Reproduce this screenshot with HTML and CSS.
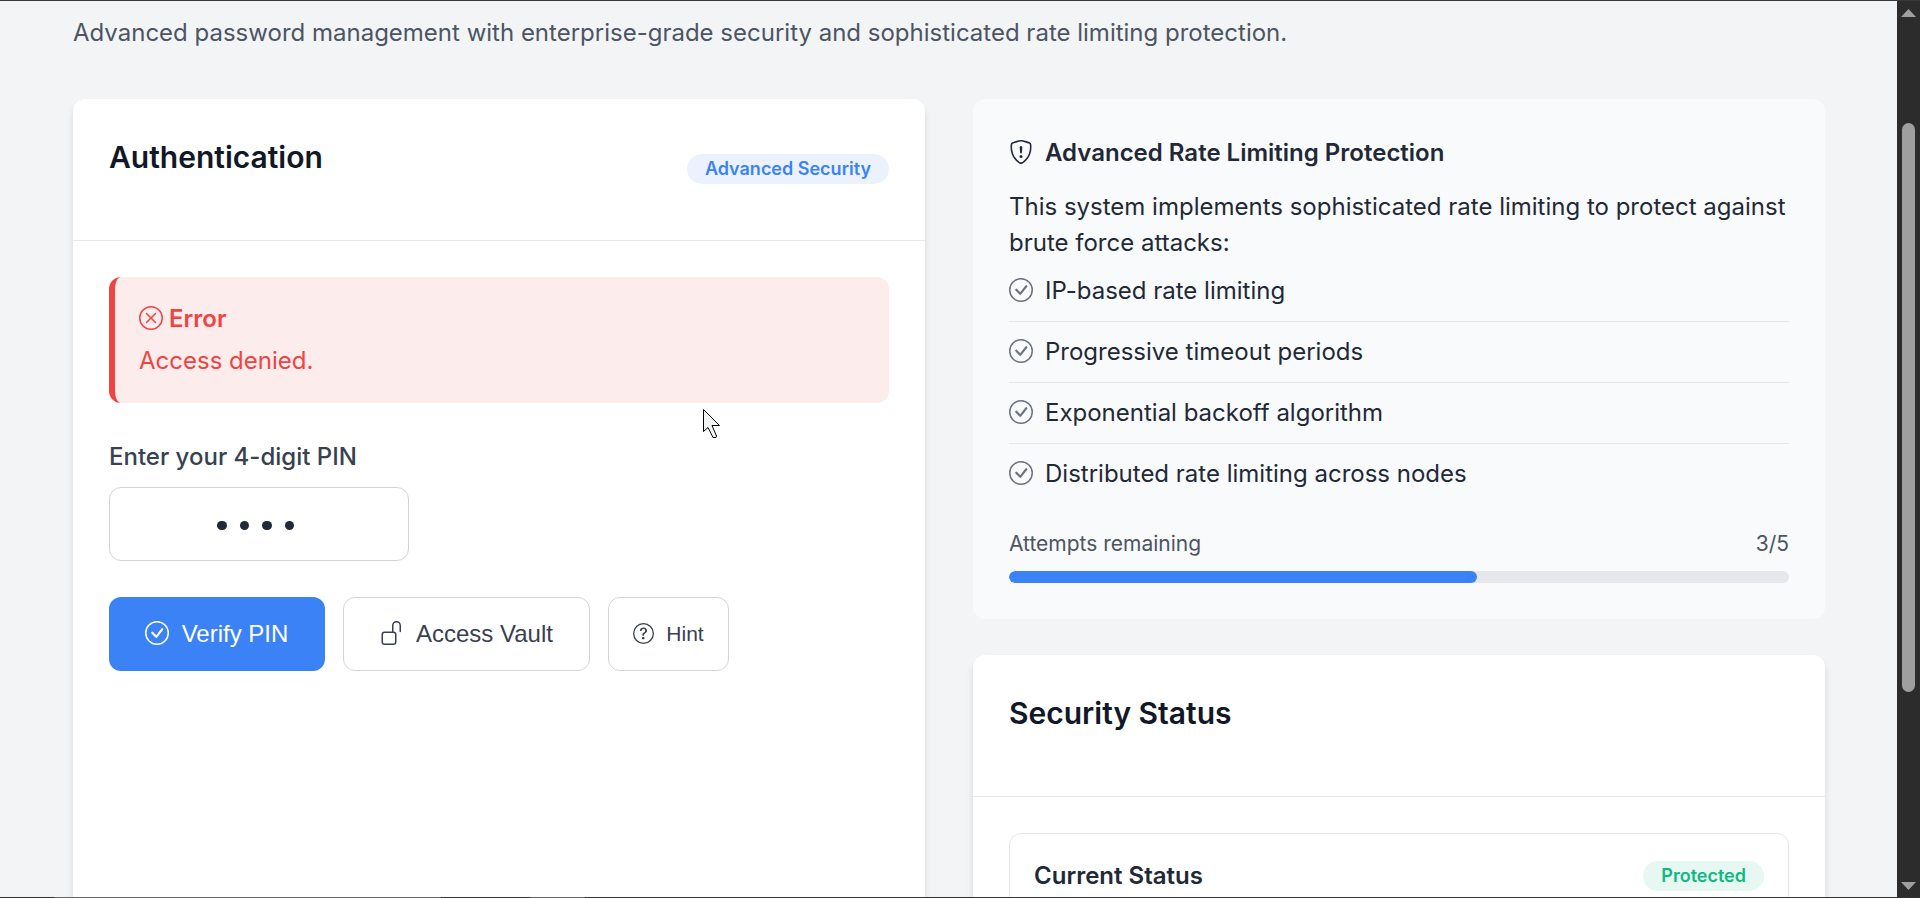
FILE: index.html
```html
<!DOCTYPE html>
<html lang="en">
<head>
<meta charset="utf-8">
<title>Password Vault</title>
<link rel="stylesheet" href="styles.css">
</head>
<body>
<svg class="sprite" aria-hidden="true">
  <symbol id="check-circle" viewBox="0 0 16 16"><path d="M8 15A7 7 0 1 1 8 1a7 7 0 0 1 0 14m0 1A8 8 0 1 0 8 0a8 8 0 0 0 0 16"/><path d="m10.97 4.97-.02.022-3.473 4.425-2.093-2.094a.75.75 0 0 0-1.06 1.06L6.97 11.03a.75.75 0 0 0 1.079-.02l3.992-4.99a.75.75 0 0 0-1.071-1.05"/></symbol>
  <symbol id="x-circle" viewBox="0 0 16 16"><path d="M8 15A7 7 0 1 1 8 1a7 7 0 0 1 0 14m0 1A8 8 0 1 0 8 0a8 8 0 0 0 0 16"/><path d="M4.646 4.646a.5.5 0 0 1 .708 0L8 7.293l2.646-2.647a.5.5 0 0 1 .708.708L8.707 8l2.647 2.646a.5.5 0 0 1-.708.708L8 8.707l-2.646 2.647a.5.5 0 0 1-.708-.708L7.293 8 4.646 5.354a.5.5 0 0 1 0-.708"/></symbol>
  <symbol id="question-circle" viewBox="0 0 16 16"><path d="M8 15A7 7 0 1 1 8 1a7 7 0 0 1 0 14m0 1A8 8 0 1 0 8 0a8 8 0 0 0 0 16"/><path d="M5.255 5.786a.237.237 0 0 0 .241.247h.825c.138 0 .248-.113.266-.25.09-.656.54-1.134 1.342-1.134.686 0 1.314.343 1.314 1.168 0 .635-.374.927-.965 1.371-.673.489-1.206 1.06-1.168 1.987l.003.217a.25.25 0 0 0 .25.246h.811a.25.25 0 0 0 .25-.25v-.105c0-.718.273-.927 1.01-1.486.609-.463 1.244-.977 1.244-2.056 0-1.511-1.276-2.241-2.673-2.241-1.267 0-2.655.59-2.75 2.286m1.557 5.763c0 .533.425.927 1.01.927.609 0 1.028-.394 1.028-.927 0-.552-.42-.94-1.029-.94-.584 0-1.009.388-1.009.94"/></symbol>
  <symbol id="unlock" viewBox="0 0 16 16"><path d="M11 1a2 2 0 0 0-2 2v4a2 2 0 0 1 2 2v5a2 2 0 0 1-2 2H3a2 2 0 0 1-2-2V9a2 2 0 0 1 2-2h5V3a3 3 0 0 1 6 0v4a.5.5 0 0 1-1 0V3a2 2 0 0 0-2-2M3 8a1 1 0 0 0-1 1v5a1 1 0 0 0 1 1h6a1 1 0 0 0 1-1V9a1 1 0 0 0-1-1z"/></symbol>
  <symbol id="shield" viewBox="0 0 16 16"><path d="M5.338 1.59a61 61 0 0 0-2.837.856.48.48 0 0 0-.328.39c-.554 4.157.726 7.19 2.253 9.188a10.7 10.7 0 0 0 2.287 2.233c.346.244.652.42.893.533q.18.085.293.118a1 1 0 0 0 .101.025 1 1 0 0 0 .1-.025q.114-.034.294-.118c.24-.113.547-.29.893-.533a10.7 10.7 0 0 0 2.287-2.233c1.527-1.997 2.807-5.031 2.253-9.188a.48.48 0 0 0-.328-.39c-.651-.213-1.75-.56-2.837-.855C9.552 1.29 8.531 1.067 8 1.067c-.53 0-1.552.223-2.662.524zM5.072.56C6.157.265 7.31 0 8 0s1.843.265 2.928.56c1.11.3 2.229.655 2.887.87a1.54 1.54 0 0 1 1.044 1.262c.596 4.477-.787 7.795-2.465 9.99a11.8 11.8 0 0 1-2.517 2.453 7 7 0 0 1-1.048.625c-.28.132-.581.24-.829.24s-.548-.108-.829-.24a7 7 0 0 1-1.048-.625 11.8 11.8 0 0 1-2.517-2.453C1.928 10.487.545 7.169 1.141 2.692A1.54 1.54 0 0 1 2.185 1.43 63 63 0 0 1 5.072.56"/><path d="M7.001 11a1 1 0 1 1 2 0 1 1 0 0 1-2 0M7.1 4.995a.905.905 0 1 1 1.8 0l-.35 3.507a.553.553 0 0 1-1.1 0z"/></symbol>
</svg>
<div class="window">
  <main class="page">
    <p class="lead">Advanced password management with enterprise-grade security and sophisticated rate limiting protection.</p>
    <div class="columns">
      <section class="card auth">
        <header class="card-header">
          <h2 class="card-title">Authentication</h2>
          <span class="badge badge-info">Advanced Security</span>
        </header>
        <div class="card-body">
          <div class="alert">
            <div class="alert-title"><svg class="icon"><use href="#x-circle"/></svg><span>Error</span></div>
            <div>Access denied.</div>
          </div>
          <div class="label">Enter your 4-digit PIN</div>
          <div class="pin"><i class="dot"></i><i class="dot"></i><i class="dot"></i><i class="dot"></i></div>
          <div class="actions">
            <button class="btn btn-primary"><svg class="icon"><use href="#check-circle"/></svg>Verify PIN</button>
            <button class="btn btn-vault"><svg class="icon"><use href="#unlock"/></svg>Access Vault</button>
            <button class="btn btn-small"><svg class="icon"><use href="#question-circle"/></svg>Hint</button>
          </div>
        </div>
      </section>
      <div class="side">
        <section class="info">
          <h3 class="info-title"><svg class="icon"><use href="#shield"/></svg>Advanced Rate Limiting Protection</h3>
          <p class="info-text">This system implements sophisticated rate limiting to protect against brute force attacks:</p>
          <ul class="features">
            <li class="feature"><svg class="icon"><use href="#check-circle"/></svg>IP-based rate limiting</li>
            <li class="feature"><svg class="icon"><use href="#check-circle"/></svg>Progressive timeout periods</li>
            <li class="feature"><svg class="icon"><use href="#check-circle"/></svg>Exponential backoff algorithm</li>
            <li class="feature"><svg class="icon"><use href="#check-circle"/></svg>Distributed rate limiting across nodes</li>
          </ul>
          <div class="attempts"><span>Attempts remaining</span><span>3/5</span></div>
          <div class="meter"><div class="meter-fill" style="width:60%"></div></div>
        </section>
        <section class="card status">
          <header class="card-header"><h2 class="card-title">Security Status</h2></header>
          <div class="card-body">
            <div class="status-box">
              <h3 class="status-title">Current Status</h3>
              <span class="badge badge-ok">Protected</span>
            </div>
          </div>
        </section>
      </div>
    </div>
  </main>
  <div class="scrollbar">
    <svg class="arrow" viewBox="0 0 15 8"><path d="M0 8 7.5 0 15 8z"/></svg>
    <div class="thumb"></div>
    <svg class="arrow" viewBox="0 0 15 8"><path d="M0 0 7.5 8 15 0z"/></svg>
  </div>
</div>
<div class="edge edge-top"></div>
<div class="edge edge-bottom"></div>
<svg class="cursor" viewBox="0 0 18 30"><path d="M.5 .5V22.5L5 18.500 10 28.500H13L13.500 27 9 16.500H16.500z"/></svg>
</body>
</html>
```
FILE: styles.css
```css
* { box-sizing: border-box; }
body {
  margin: 0;
  height: 898px;
  overflow: hidden;
  position: relative;
  background: #f3f4f6;
  color: #1f2937;
  font: 400 24px/36px Inter, sans-serif;
}
h2, h3, p, ul { margin: 0; padding: 0; }
.sprite { position: absolute; width: 0; height: 0; }
.window { display: flex; height: 898px; }
.page { flex: 1; padding: 15px 72px 0 73px; overflow: hidden; }
.lead { color: #4b5563; margin-bottom: 48px; }
.columns { display: grid; grid-template-columns: 852px 852px; gap: 48px; align-items: start; }
.card {
  background: #fff;
  border-radius: 12px;
  box-shadow: 0 6px 9px -1px rgba(0, 0, 0, 0.1), 0 3px 6px -1px rgba(0, 0, 0, 0.06);
}
.auth { height: 900px; }
.card-header {
  display: flex;
  justify-content: space-between;
  align-items: center;
  height: 142px;
  padding: 36px;
  border-bottom: 1px solid #e5e7eb;
}
.card-title { font-size: 30px; line-height: 45px; font-weight: 600; color: #111827; margin-bottom: 24px; }
.card-body { padding: 36px; }
.badge { height: 30px; line-height: 30px; padding: 0 18px; border-radius: 15px; font-size: 18px; font-weight: 600; }
.badge-info { margin-bottom: 1px; color: #3b82f6; background: #ebf2fe; }
.badge-ok { color: #10b981; background: #e7f8f2; }
.icon { display: block; width: 1em; height: 1em; margin: -2px 0.5px 0 -0.5px; fill: currentColor; flex: none; }
.alert { height: 126px; padding: 24px; border-left: 6px solid #ef4444; border-radius: 12px; background: #fdecec; color: #ef4444; }
.alert-title { display: flex; align-items: center; gap: 6px; margin-bottom: 6px; font-weight: 600; }
.label { margin: 36px 0 12px; font-weight: 500; color: #374151; }
.pin { display: flex; align-items: center; justify-content: center; gap: 13px; width: 300px; height: 74px; padding: 3px 7px 0 0; border: 1px solid #d1d5db; border-radius: 12px; }
.dot { width: 9.500px; height: 9.500px; border-radius: 50%; background: #1f2937; }
.actions { display: flex; gap: 18px; margin-top: 36px; }
.btn {
  display: flex;
  align-items: center;
  justify-content: center;
  gap: 12px;
  height: 74px;
  padding: 0;
  border: 1px solid #d1d5db;
  border-radius: 12px;
  background: #fff;
  color: #374151;
  font: 400 24px "Liberation Sans", Arial, sans-serif;
}
.btn-primary { width: 216px; border: 0; background: #3b82f6; color: #fff; }
.btn-vault { width: 247px; }
.btn-small { width: 121px; font-size: 21px; }
.info { height: 520px; padding: 36px; border-radius: 12px; background: #f9fafb; }
.info-title { display: flex; align-items: center; gap: 12px; font-size: 24px; font-weight: 600; }
.info-text { margin-top: 18px; }
.features { list-style: none; }
.feature { display: flex; align-items: center; gap: 12px; padding: 12px 0; border-bottom: 1px solid #e5e7eb; }
.feature:last-child { border-bottom: 0; }
.feature .icon { color: #6b7280; }
.attempts { display: flex; justify-content: space-between; margin: 24px 0 12px; font-size: 21px; line-height: 31px; color: #4b5563; }
.meter { height: 12px; border-radius: 6px; background: #e5e7eb; overflow: hidden; }
.meter-fill { height: 12px; border-radius: 6px; background: #3b82f6; }
.status { margin-top: 36px; height: 400px; }
.status-box { display: flex; justify-content: space-between; align-items: flex-start; height: 200px; padding: 24px; border: 1px solid #e5e7eb; border-radius: 12px; }
.status-title { font-size: 24px; font-weight: 600; }
.status-box .badge { margin-top: 3px; }
.scrollbar { display: flex; flex-direction: column; align-items: center; justify-content: space-between; width: 23px; padding: 9px 0 8px; background: #2c2c2c; }
.thumb { width: 13px; height: 569px; border-radius: 7px; background: #9f9f9f; margin-bottom: 84px; }
.arrow { width: 15px; height: 8px; fill: #9f9f9f; }
.edge { position: absolute; left: 0; right: 0; height: 1px; background: #3a383c; }
.edge-top { top: 0; }
.edge-bottom { bottom: 0; background: linear-gradient(90deg, #333 54px, #666 54px 441px, #333 441px 530px, #666 530px 585px, #333 585px); }
.cursor { position: absolute; left: 703px; top: 409px; width: 18px; height: 30px; fill: #f2f4f4; stroke: #000; stroke-width: 1; }
```
